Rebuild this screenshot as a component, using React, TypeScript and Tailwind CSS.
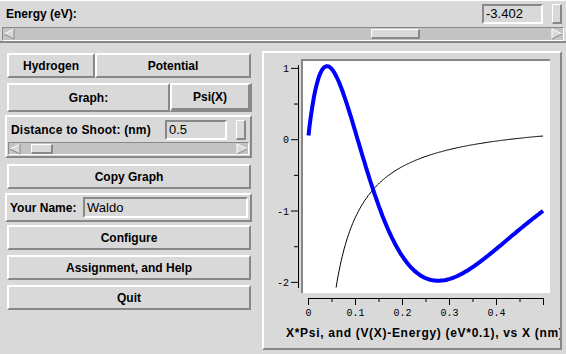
const raised = 'border-2 border-t-white border-l-white border-r-[#888] border-b-[#888]';
const sunken = 'border-2 border-t-[#888] border-l-[#888] border-r-white border-b-white';
const thumb = 'border-t border-l border-r-2 border-b-2 border-t-white border-l-white border-r-[#888] border-b-[#888] bg-[#d9d9d9]';

function Arrow({ dir }: { dir: 'left' | 'right' }) {
  return (
    <svg width="12" height="12" viewBox="0 0 12 12" className="shrink-0">
      {dir === 'left' ? (
        <>
          <polygon points="1,6 11,1 11,11" fill="#d9d9d9" />
          <line x1="1" y1="6" x2="11" y2="1" stroke="#fff" />
          <line x1="11" y1="1" x2="11" y2="11" stroke="#888" />
          <line x1="11" y1="11" x2="1" y2="6" stroke="#888" />
        </>
      ) : (
        <>
          <polygon points="11,6 1,1 1,11" fill="#d9d9d9" />
          <line x1="1" y1="1" x2="11" y2="6" stroke="#fff" />
          <line x1="1" y1="1" x2="1" y2="11" stroke="#fff" />
          <line x1="1" y1="11" x2="11" y2="6" stroke="#888" />
        </>
      )}
    </svg>
  );
}

function Scrollbar({ className, thumbClass }: { className: string; thumbClass: string }) {
  return (
    <div className={`flex items-center bg-[#c3c3c3] border border-t-[#888] border-l-[#888] border-r-white border-b-white ${className}`}>
      <Arrow dir="left" />
      <div className="flex-1 flex items-center h-full">
        <div className={`h-[10px] ${thumb} ${thumbClass}`} />
      </div>
      <Arrow dir="right" />
    </div>
  );
}

function Button({ label, className = '' }: { label: string; className?: string }) {
  return (
    <div className={`flex items-center justify-center h-[25px] bg-[#d9d9d9] font-bold text-[12px] ${raised} ${className}`}>
      {label}
    </div>
  );
}

const X = (x: number) => 308 + 470 * x;
const Y = (v: number) => 139.7 - 71.33 * v;
const psi = (x: number) => {
  const u = x / 0.0529;
  return 1.6 * u * (2 - u) * Math.exp(-u / 2);
};
const pot = (x: number) => 0.1 * (3.402 - 1.44 / x);

function curve(f: (x: number) => number, x0: number, x1: number, n: number) {
  let d = '';
  for (let i = 0; i <= n; i++) {
    const x = x0 + ((x1 - x0) * i) / n;
    d += `${i ? 'L' : 'M'}${X(x).toFixed(1)},${Y(f(x)).toFixed(1)} `;
  }
  return d;
}

function Plot() {
  const yMajor = [1, 0, -1, -2];
  const yMinor = [0.5, -0.5, -1.5];
  const xMajor = [0, 0.1, 0.2, 0.3, 0.4, 0.5];
  const xMinor = [0.05, 0.15, 0.25, 0.35, 0.45];
  return (
    <svg width="296" height="272" viewBox="264 53 296 272" className="block">
      <rect x="301" y="59" width="249" height="234" fill="#fff" />
      <rect x="301" y="59" width="249" height="2" fill="#888" />
      <rect x="301" y="59" width="2" height="234" fill="#888" />
      <path d={curve(pot, 0.0597, 0.5, 200)} fill="none" stroke="#000" strokeWidth="1" />
      <path d={curve(psi, 0.001, 0.5, 200)} fill="none" stroke="#0000ff" strokeWidth="4" strokeLinejoin="round" />

      <line x1="298.5" y1="65" x2="298.5" y2="288" stroke="#000" />
      {yMajor.map((v) => (
        <g key={v}>
          <line x1="291" y1={Y(v)} x2="298" y2={Y(v)} stroke="#000" />
          <text x="289" y={Y(v) + 3.5} textAnchor="end" fontSize="10" fontFamily="'Liberation Mono', monospace" fill="#000">
            {v}
          </text>
        </g>
      ))}
      {yMinor.map((v) => (
        <line key={v} x1="294" y1={Y(v)} x2="298" y2={Y(v)} stroke="#000" />
      ))}

      <line x1="308" y1="298.5" x2="543.5" y2="298.5" stroke="#000" />
      {xMajor.map((v) => (
        <g key={v}>
          <line x1={X(v) + 0.5} y1="298" x2={X(v) + 0.5} y2="305" stroke="#000" />
          {v < 0.45 && (
            <text x={X(v) + 0.5} y="316" textAnchor="middle" fontSize="10" fontFamily="'Liberation Mono', monospace" fill="#000">
              {v}
            </text>
          )}
        </g>
      ))}
      {xMinor.map((v) => (
        <line key={v} x1={X(v) + 0.5} y1="298" x2={X(v) + 0.5} y2="302" stroke="#000" />
      ))}
    </svg>
  );
}

export default function App() {
  return (
    <div className="w-[566px] h-[354px] bg-[#d9d9d9] text-black overflow-hidden font-['Liberation_Sans',Arial,sans-serif]">
      {/* energy header */}
      <div className="h-[43px] border-t border-t-white border-b-2 border-b-[#888] flex flex-col">
        <div className="h-[26px] flex items-center">
          <span className="pl-[6px] font-bold text-[12px]">Energy (eV):</span>
          <div className={`ml-auto w-[61px] h-[20px] flex items-center pl-[2px] text-[13px] ${sunken}`}>-3.402</div>
          <div className={`ml-[9px] mr-[4px] w-[10px] h-[20px] ${thumb}`} />
        </div>
        <Scrollbar className="mx-[2px] h-[14px]" thumbClass="ml-[356px] w-[49px]" />
      </div>

      <div className="flex">
        {/* controls */}
        <div className="w-[262px] flex flex-col">
          <div className="mt-[10px] ml-[7px] w-[244px] flex">
            <Button label="Hydrogen" className="w-[88px]" />
            <Button label="Potential" className="flex-1" />
          </div>

          <div className="mt-[5px] ml-[7px] w-[245px] h-[29px] flex">
            <div className={`flex-1 flex items-center justify-center font-bold text-[12px] ${raised}`}>Graph:</div>
            <div className="w-[82px] flex items-center justify-center font-bold text-[12px] border-t-2 border-l-2 border-r-4 border-b-4 border-t-white border-l-white border-r-[#888] border-b-[#888]">
              Psi(X)
            </div>
          </div>

          <div className={`mt-[3px] ml-[5px] w-[247px] h-[43px] flex flex-col ${raised}`}>
            <div className="mt-[2px] h-[21px] flex items-center">
              <span className="pl-[4px] font-bold text-[12px] tracking-[0.2px]">Distance to Shoot: (nm)</span>
              <div className={`ml-auto w-[62px] h-[20px] flex items-center pl-[2px] text-[13px] ${sunken}`}>0.5</div>
              <div className={`ml-[9px] mr-[4px] w-[10px] h-[20px] ${thumb}`} />
            </div>
            <Scrollbar className="mt-[2px] mx-[1px] h-[13px]" thumbClass="ml-[10px] w-[22px]" />
          </div>

          <Button label="Copy Graph" className="mt-[6px] ml-[7px] w-[244px]" />

          <div className={`mt-[4px] ml-[5px] w-[247px] h-[29px] flex items-center ${raised}`}>
            <span className="pl-[3px] font-bold text-[12px]">Your Name:</span>
            <div className={`ml-auto mr-[2px] w-[165px] h-[21px] flex items-center pl-[2px] text-[13px] ${sunken}`}>Waldo</div>
          </div>

          <Button label="Configure" className="mt-[3px] ml-[7px] w-[244px]" />
          <Button label="Assignment, and Help" className="mt-[5px] ml-[7px] w-[244px]" />
          <Button label="Quit" className="mt-[5px] ml-[7px] w-[244px]" />
        </div>

        {/* graph */}
        <div className={`mt-[8px] w-[300px] h-[299px] flex flex-col overflow-hidden ${raised}`}>
          <Plot />
          <div className="h-[16px] leading-[16px] pl-[22px] whitespace-nowrap overflow-hidden font-bold text-[12px] tracking-[0.7px]">
            X*Psi, and (V(X)-Energy) (eV*0.1), vs X (nm)
          </div>
        </div>
      </div>
    </div>
  );
}
